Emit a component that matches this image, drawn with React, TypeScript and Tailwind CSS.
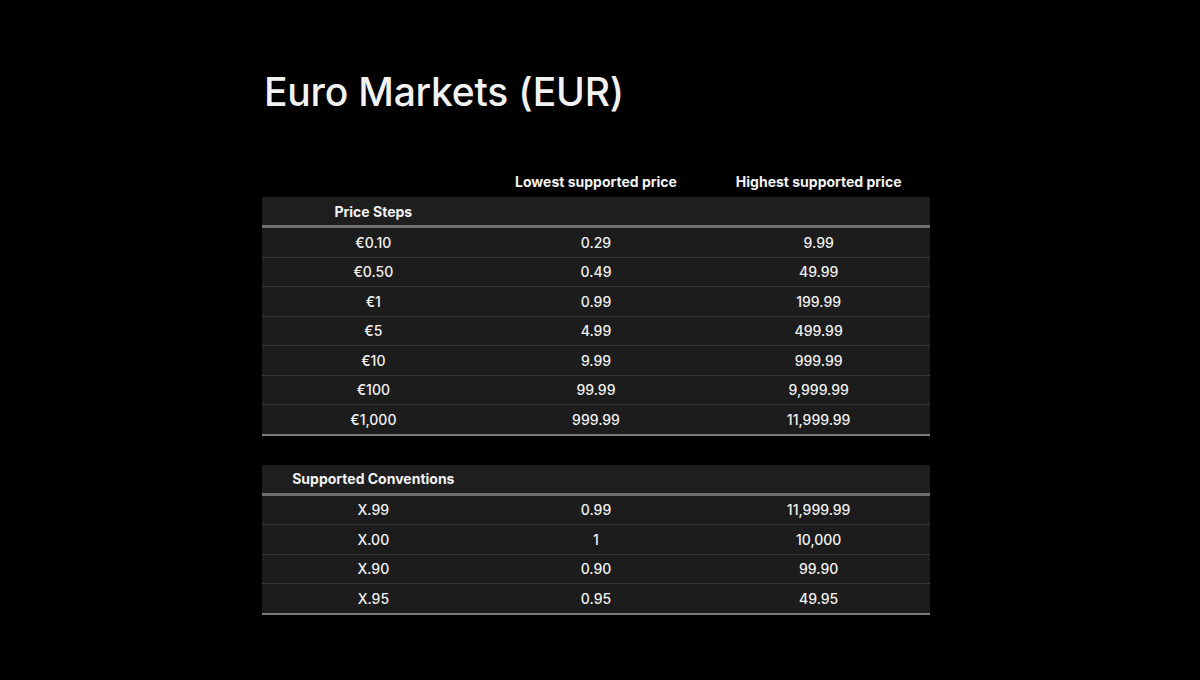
import React from 'react';

const priceSteps = [
  ['€0.10', '0.29', '9.99'],
  ['€0.50', '0.49', '49.99'],
  ['€1', '0.99', '199.99'],
  ['€5', '4.99', '499.99'],
  ['€10', '9.99', '999.99'],
  ['€100', '99.99', '9,999.99'],
  ['€1,000', '999.99', '11,999.99'],
];

const conventions = [
  ['X.99', '0.99', '11,999.99'],
  ['X.00', '1', '10,000'],
  ['X.90', '0.90', '99.90'],
  ['X.95', '0.95', '49.95'],
];

const PriceTable: React.FC<{ title: string; rows: string[][] }> = ({ title, rows }) => (
  <div className="bg-[#1c1c1c] border-b-2 border-[#7a7a7a]">
    <div className="grid grid-cols-3 h-[31px] items-center bg-[#1e1e1e] border-b-[3px] border-[#6e6e6e]">
      <div className="text-center font-bold text-[14px]">{title}</div>
    </div>
    {rows.map((row, i) => (
      <div
        key={row[0]}
        className={`grid grid-cols-3 items-center text-[14px] font-medium ${i > 0 ? 'h-[29.5px] border-t border-[#363636]' : 'h-[28.5px]'}`}
      >
        {row.map((cell, j) => (
          <div key={j} className="text-center">{cell}</div>
        ))}
      </div>
    ))}
  </div>
);

export default function App() {
  return (
    <div
      className="w-[1200px] h-[680px] bg-black text-[#f2f2f2] overflow-hidden"
      style={{ fontFamily: 'Inter, "Noto Sans", sans-serif' }}
    >
      <div className="w-[668px] ml-[262px] pt-[66px]">
        <h1 className="text-[39px] leading-[52px] font-medium tracking-[-0.2px] pl-[2px]">Euro Markets (EUR)</h1>
        <div className="grid grid-cols-3 mt-[48px] h-[30px] items-center text-[14px] font-bold">
          <div />
          <div className="text-center">Lowest supported price</div>
          <div className="text-center">Highest supported price</div>
        </div>
        <div className="mt-[1px]">
          <PriceTable title="Price Steps" rows={priceSteps} />
        </div>
        <div className="mt-[29px]">
          <PriceTable title="Supported Conventions" rows={conventions} />
        </div>
      </div>
    </div>
  );
}
